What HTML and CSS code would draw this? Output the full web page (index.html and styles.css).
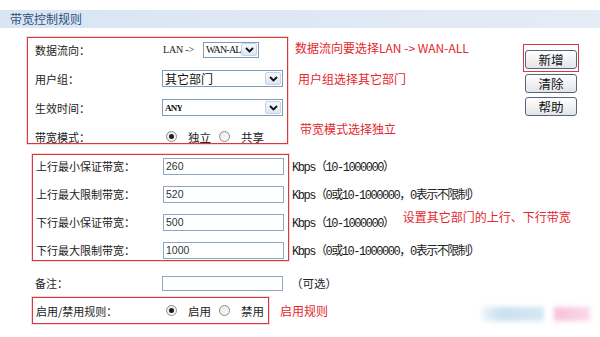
FILE: index.html
```html
<!DOCTYPE html>
<html lang="zh-CN">
<head>
    <meta charset="UTF-8">
    <title>带宽控制规则</title>
    <link rel="stylesheet" href="styles.css">
</head>
<body>
    <div class="title-bar">带宽控制规则</div>

    <div class="form">
        <div class="group">
            <div class="mark box-basic">
                <div class="row">
                    <span class="label">数据流向：</span>
                    <span class="lan">LAN -&gt;</span>
                    <span class="select select-dir">
                        <span class="select-text">WAN-AL</span>
                        <span class="select-btn"><svg width="9" height="6" viewBox="0 0 9 6"><path d="M1 1 L4.5 4.5 L8 1" fill="none" stroke="#111" stroke-width="1.8"/></svg></span>
                    </span>
                </div>
                <div class="row">
                    <span class="label">用户组：</span>
                    <span class="select select-wide">
                        <span class="select-text cjk">其它部门</span>
                        <span class="select-btn"><svg width="9" height="6" viewBox="0 0 9 6"><path d="M1 1 L4.5 4.5 L8 1" fill="none" stroke="#111" stroke-width="1.8"/></svg></span>
                    </span>
                </div>
                <div class="row">
                    <span class="label">生效时间：</span>
                    <span class="select select-wide">
                        <span class="select-text any">ANY</span>
                        <span class="select-btn"><svg width="9" height="6" viewBox="0 0 9 6"><path d="M1 1 L4.5 4.5 L8 1" fill="none" stroke="#111" stroke-width="1.8"/></svg></span>
                    </span>
                </div>
                <div class="row">
                    <span class="label">带宽模式：</span>
                    <span class="radio checked"></span><span class="radio-text">独立</span>
                    <span class="radio"></span><span class="radio-text">共享</span>
                </div>
            </div>

            <div class="notes">
                <div class="note note-flow">数据流向要选择LAN -&gt; WAN-ALL</div>
                <div class="note note-group">用户组选择其它部门</div>
                <div class="note note-mode">带宽模式选择独立</div>
            </div>

            <div class="buttons">
                <div class="btn-mark"><button class="btn">新增</button></div>
                <button class="btn">清除</button>
                <button class="btn">帮助</button>
            </div>
        </div>

        <div class="group">
            <div class="mark box-rate">
                <div class="row"><span class="label">上行最小保证带宽：</span><span class="input">260</span></div>
                <div class="row"><span class="label">上行最大限制带宽：</span><span class="input">520</span></div>
                <div class="row"><span class="label">下行最小保证带宽：</span><span class="input">500</span></div>
                <div class="row"><span class="label">下行最大限制带宽：</span><span class="input">1000</span></div>
            </div>
            <div class="units">
                <div class="unit-row"><span class="unit">Kbps（10-1000000）</span></div>
                <div class="unit-row"><span class="unit">Kbps（0或10-1000000，0表示不限制）</span></div>
                <div class="unit-row"><span class="unit">Kbps（10-1000000）</span><span class="note note-rate">设置其它部门的上行、下行带宽</span></div>
                <div class="unit-row"><span class="unit">Kbps（0或10-1000000，0表示不限制）</span></div>
            </div>
        </div>

        <div class="row row-remark">
            <span class="label">备注：</span>
            <span class="input input-remark"></span>
            <span class="optional">（可选）</span>
        </div>

        <div class="group group-enable">
            <div class="mark box-enable">
                <div class="row">
                    <span class="label">启用/禁用规则：</span>
                    <span class="radio checked"></span><span class="radio-text">启用</span>
                    <span class="radio"></span><span class="radio-text">禁用</span>
                </div>
            </div>
            <span class="note note-enable">启用规则</span>
        </div>
    </div>

    <!-- blurred watermark in the corner -->
    <div class="watermark">
        <span class="wm-blue"></span>
        <span class="wm-pink"></span>
    </div>
</body>
</html>
```

FILE: styles.css
```css
body {
    margin: 0;
    padding: 0;
    width: 600px;
    height: 337px;
    background-color: #ffffff;
    font-family: "Noto Sans CJK SC", "Liberation Sans", sans-serif;
    color: #222222;
    position: relative;
    overflow: hidden;
}
.title-bar {
    margin-top: 10px;
    height: 18px;
    line-height: 18px;
    padding-left: 10px;
    font-size: 12px;
    color: #2f4f82;
    background: linear-gradient(90deg, #d9e5f3, #e4ecf6);
}
.form {
    padding-left: 27px;
}
.group {
    display: flex;
    align-items: flex-start;
}
.mark {
    box-sizing: border-box;
    border: 1px solid #d63a3f;
    box-shadow: 0 0 0 1px rgba(235, 140, 140, 0.35);
}
.row {
    display: flex;
    align-items: center;
    font-size: 11px;
    white-space: nowrap;
}
.label {
    width: 128px;
    flex-shrink: 0;
    white-space: nowrap;
}

/* first box: direction, group, time, mode */
.box-basic {
    width: 261px;
    height: 107px;
    margin-top: 9px;
    padding-left: 7px;
}
.box-basic .row {
    height: 29px;
}
.box-basic .row:first-child {
    margin-top: -3px;
}
.lan {
    font-family: "Liberation Serif", serif;
    font-size: 10px;
    width: 40px;
    flex-shrink: 0;
    letter-spacing: -0.2px;
}
.select {
    box-sizing: border-box;
    display: flex;
    align-items: center;
    justify-content: space-between;
    flex-shrink: 0;
    border: 1px solid #7f9db9;
    background-color: #ffffff;
    padding: 0 1px 0 2px;
    overflow: hidden;
}
.select-dir {
    width: 56px;
    height: 16px;
}
.select-wide {
    width: 121px;
    height: 17px;
    margin-left: -1px;
}
.select-text {
    font-family: "Liberation Serif", serif;
    font-size: 10px;
    letter-spacing: -0.8px;
    color: #111;
    white-space: nowrap;
    overflow: hidden;
}
.select-text.cjk {
    font-family: "Noto Sans CJK SC", sans-serif;
    font-size: 12px;
    letter-spacing: 0;
}
.select-text.any {
    font-size: 9px;
    font-weight: bold;
}
.select-btn {
    box-sizing: border-box;
    width: 16px;
    height: 13px;
    flex-shrink: 0;
    display: flex;
    align-items: center;
    justify-content: center;
    border: 1px solid #c3d3e8;
    border-radius: 2px;
    background: linear-gradient(#f4f7fb, #dde6f2);
}
.radio {
    box-sizing: border-box;
    width: 11px;
    height: 11px;
    flex-shrink: 0;
    margin-left: 3px;
    border: 1px solid #8c8c8c;
    border-radius: 50%;
    background: linear-gradient(135deg, #e6e6e6, #ffffff);
    display: flex;
    align-items: center;
    justify-content: center;
}
.radio.checked::after {
    content: "";
    width: 5px;
    height: 5px;
    border-radius: 50%;
    background-color: #1e1e1e;
}
.radio-text {
    margin-left: 11px;
    margin-right: 5px;
    font-size: 11.5px;
    flex-shrink: 0;
    white-space: nowrap;
}

/* annotations */
.notes {
    margin-left: 7px;
    margin-top: 9px;
}
.note {
    font-size: 12px;
    line-height: 16px;
    color: #e4262c;
    white-space: nowrap;
}
.note-flow {
    margin-top: 3px;
}
.note-group {
    margin-top: 15px;
    margin-left: 3px;
}
.note-mode {
    margin-top: 34px;
    margin-left: 5px;
}

/* buttons */
.buttons {
    margin-left: auto;
    margin-right: 21px;
    margin-top: 16px;
    display: flex;
    flex-direction: column;
    align-items: flex-start;
}
.btn-mark {
    border: 1px solid #d63a3f;
    padding: 1px;
    margin-bottom: 2px;
}
.btn {
    width: 52px;
    height: 19px;
    padding: 0;
    border: 1px solid #56667a;
    border-radius: 3px;
    background: linear-gradient(#ffffff, #e2e4e8);
    font-family: "Noto Sans CJK SC", sans-serif;
    font-size: 12.5px;
    line-height: 15px;
    color: #111;
}
.buttons > .btn {
    margin-left: 2px;
    margin-bottom: 4px;
}

/* second box: rates */
.box-rate {
    width: 257px;
    height: 107px;
    margin-top: 10px;
    margin-left: 5px;
    padding-left: 3px;
}
.box-rate .row,
.unit-row {
    height: 28px;
}
.box-rate .row:first-child,
.unit-row:first-child {
    margin-top: -3px;
}
.box-rate .label {
    width: 127px;
}
.input {
    box-sizing: border-box;
    width: 121px;
    height: 17px;
    flex-shrink: 0;
    padding-left: 2px;
    border: 1px solid #8fa7c1;
    background-color: #ffffff;
    font-family: "Liberation Sans", sans-serif;
    font-size: 10.5px;
    line-height: 15px;
    color: #333;
}
.units {
    margin-top: 11px;
    margin-left: 3px;
}
.unit-row {
    display: flex;
    align-items: center;
}
.unit {
    font-family: "Liberation Mono", "Noto Sans CJK SC", monospace;
    font-size: 12px;
    letter-spacing: -1.45px;
    color: #222;
    white-space: nowrap;
}
.note-rate {
    margin-left: 9px;
    margin-bottom: 10px;
}

/* remark row */
.row-remark {
    height: 28px;
    margin-top: 5px;
    margin-left: 8px;
}
.row-remark .label {
    width: 127px;
}
.input-remark {
    height: 15px;
}
.optional {
    margin-left: 8px;
    font-size: 11.5px;
}

/* enable box */
.group-enable {
    align-items: center;
}
.box-enable {
    width: 237px;
    height: 27px;
    margin-left: 5px;
    padding-left: 3px;
}
.box-enable .row {
    height: 25px;
}
.box-enable .label {
    width: 127px;
}
.note-enable {
    margin-left: 11px;
}

/* watermark */
.watermark {
    position: absolute;
    left: 482px;
    top: 303px;
    width: 118px;
    height: 22px;
    display: flex;
    align-items: center;
}
.wm-blue {
    width: 62px;
    height: 14px;
    background: linear-gradient(90deg, rgba(205, 226, 240, 0.4), #c9e0ef 30%, #d5e7f2);
    filter: blur(2.5px);
}
.wm-pink {
    width: 36px;
    height: 14px;
    margin-left: 10px;
    background: linear-gradient(90deg, #f6bfd9, #fbd9e8);
    filter: blur(2.5px);
}
```
